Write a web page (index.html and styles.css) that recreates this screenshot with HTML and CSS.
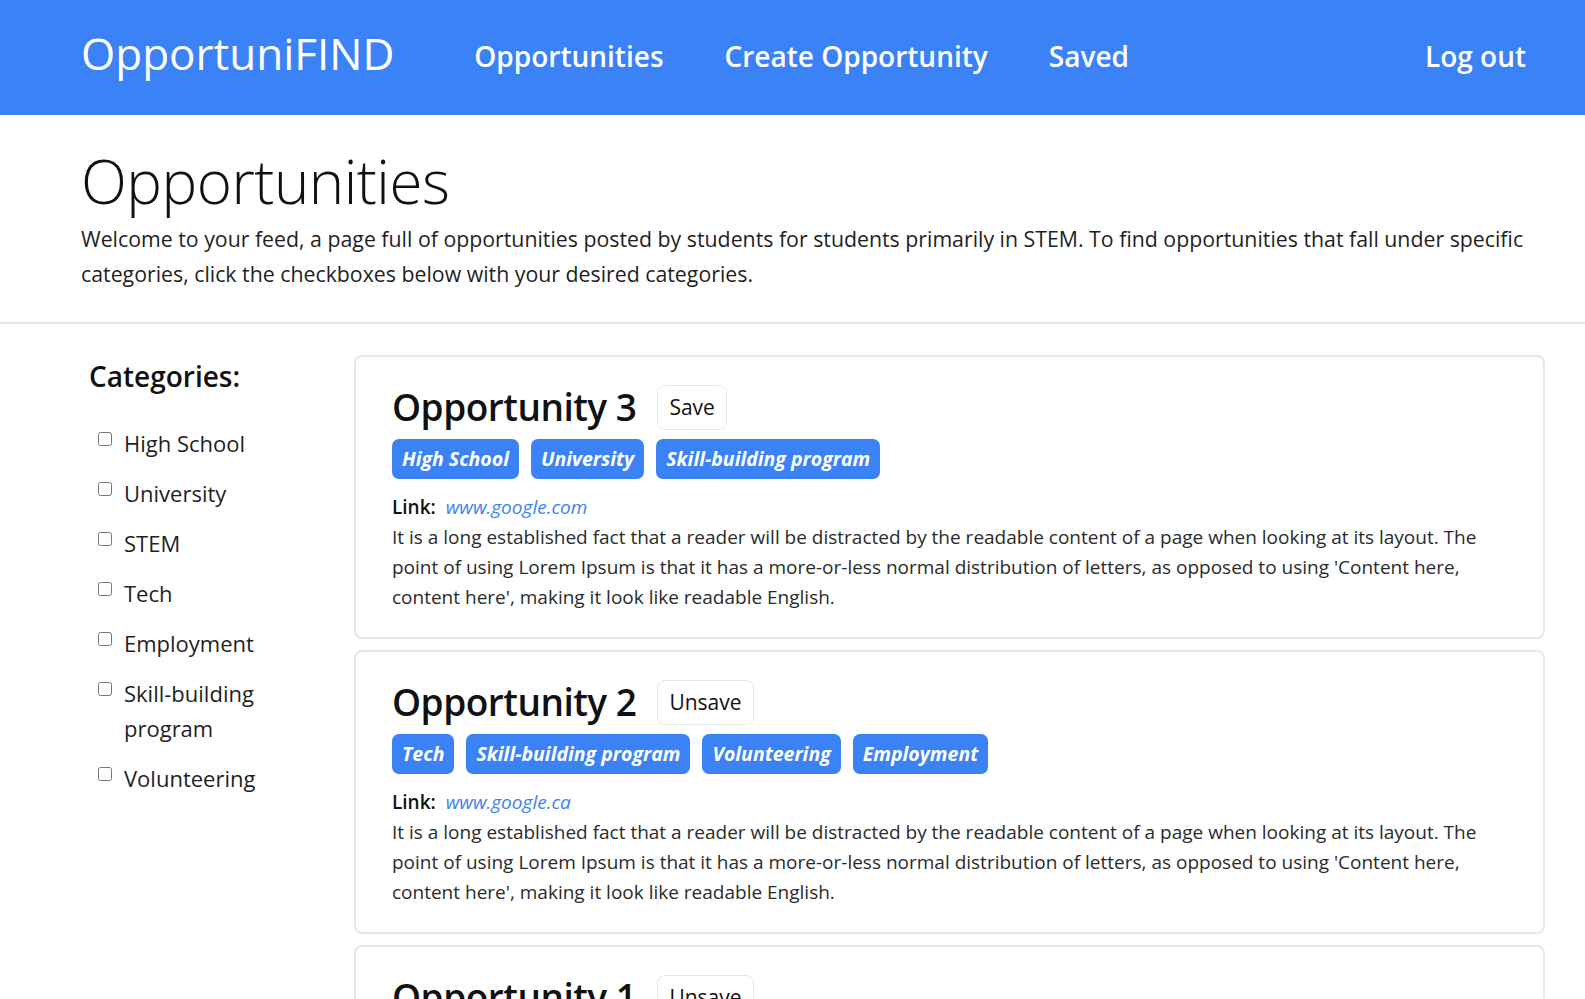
FILE: index.html
```html
<!DOCTYPE html>
<html lang="en">
<head>
<meta charset="utf-8">
<title>OpportuniFIND</title>
<link rel="stylesheet" href="styles.css">
</head>
<body>
<header class="nav">
  <a class="logo" href="#">OpportuniFIND</a>
  <nav class="nav-links">
    <a href="#">Opportunities</a>
    <a href="#">Create Opportunity</a>
    <a href="#">Saved</a>
  </nav>
  <a class="logout" href="#">Log out</a>
</header>

<section class="intro">
  <h1>Opportunities</h1>
  <p>Welcome to your feed, a page full of opportunities posted by students for students primarily in STEM. To find opportunities that fall under specific categories, click the checkboxes below with your desired categories.</p>
</section>

<main class="main">
  <aside class="sidebar">
    <h2>Categories:</h2>
    <ul class="cats">
      <li><input type="checkbox" id="c1"><label for="c1">High School</label></li>
      <li><input type="checkbox" id="c2"><label for="c2">University</label></li>
      <li><input type="checkbox" id="c3"><label for="c3">STEM</label></li>
      <li><input type="checkbox" id="c4"><label for="c4">Tech</label></li>
      <li><input type="checkbox" id="c5"><label for="c5">Employment</label></li>
      <li><input type="checkbox" id="c6"><label for="c6">Skill-building program</label></li>
      <li><input type="checkbox" id="c7"><label for="c7">Volunteering</label></li>
    </ul>
  </aside>

  <div class="feed">
    <article class="card">
      <div class="card-head">
        <h3>Opportunity 3</h3>
        <button class="save">Save</button>
      </div>
      <div class="tags">
        <span class="tag">High School</span>
        <span class="tag">University</span>
        <span class="tag">Skill-building program</span>
      </div>
      <p class="link"><strong>Link:</strong> <a href="#">www.google.com</a></p>
      <p class="desc">It is a long established fact that a reader will be distracted by the readable content of a page when looking at its layout. The point of using Lorem Ipsum is that it has a more-or-less normal distribution of letters, as opposed to using 'Content here, content here', making it look like readable English.</p>
    </article>

    <article class="card">
      <div class="card-head">
        <h3>Opportunity 2</h3>
        <button class="save">Unsave</button>
      </div>
      <div class="tags">
        <span class="tag">Tech</span>
        <span class="tag">Skill-building program</span>
        <span class="tag">Volunteering</span>
        <span class="tag">Employment</span>
      </div>
      <p class="link"><strong>Link:</strong> <a href="#">www.google.ca</a></p>
      <p class="desc">It is a long established fact that a reader will be distracted by the readable content of a page when looking at its layout. The point of using Lorem Ipsum is that it has a more-or-less normal distribution of letters, as opposed to using 'Content here, content here', making it look like readable English.</p>
    </article>

    <article class="card">
      <div class="card-head">
        <h3>Opportunity 1</h3>
        <button class="save">Unsave</button>
      </div>
      <div class="tags">
        <span class="tag">STEM</span>
        <span class="tag">University</span>
      </div>
      <p class="link"><strong>Link:</strong> <a href="#">www.google.com</a></p>
      <p class="desc">It is a long established fact that a reader will be distracted by the readable content of a page when looking at its layout. The point of using Lorem Ipsum is that it has a more-or-less normal distribution of letters, as opposed to using 'Content here, content here', making it look like readable English.</p>
    </article>
  </div>
</main>
</body>
</html>
```
FILE: styles.css
```css
* { box-sizing: border-box; }
html, body { margin: 0; padding: 0; }
body {
  font-family: "Open Sans", "Noto Sans", sans-serif;
  color: #111;
  background: #fff;
}
a { text-decoration: none; }

.nav {
  display: flex;
  align-items: center;
  height: 115px;
  padding: 0 59px 0 81px;
  background: #3b82f6;
}
.nav a { color: #fff; }
.logo {
  font-size: 44px;
  font-weight: 500;
  margin-right: 80px;
  margin-bottom: 10px;
}
.nav-links { display: flex; gap: 61px; margin-bottom: 4px; }
.nav-links a, .logout {
  font-size: 28px;
  font-weight: 600;
}
.logout { margin-left: auto; margin-bottom: 4px; }

.intro {
  padding: 30px 57px 31px 81px;
  border-bottom: 2px solid #e5e7eb;
}
.intro h1 {
  margin: 0 0 4px;
  font-size: 60px;
  font-weight: 300;
  line-height: 1.2;
  letter-spacing: -0.5px;
}
.intro p {
  margin: 0;
  font-size: 21.3px;
  line-height: 35px;
  color: #1f1f1f;
}

.main {
  display: flex;
  padding: 31px 40px 0 81px;
}
.sidebar {
  width: 273px;
  flex-shrink: 0;
  padding-left: 8px;
}
.sidebar h2 {
  margin: 0 0 30px;
  padding-top: 1px;
  font-size: 28px;
  font-weight: 600;
  line-height: 40px;
}
.cats { list-style: none; margin: 0; padding: 0 0 0 9px; }
.cats li {
  display: flex;
  align-items: flex-start;
  margin-bottom: 15px;
  width: 175px;
}
.cats input {
  width: 14px;
  height: 14px;
  margin: 6px 12px 0 0;
  flex-shrink: 0;
}
.cats label {
  font-size: 22px;
  line-height: 35px;
  color: #1f1f1f;
}

.feed {
  flex: 1;
  display: flex;
  flex-direction: column;
  gap: 11px;
}
.card {
  border: 2px solid #e5e7eb;
  border-radius: 8px;
  padding: 25px 36px 25px 36px;
}
.card-head {
  display: flex;
  align-items: center;
  gap: 21px;
}
.card-head h3 {
  margin: 0;
  font-size: 37px;
  font-weight: 600;
  line-height: 50px;
  letter-spacing: -0.5px;
}
.save {
  font-family: inherit;
  font-size: 21px;
  color: #111;
  background: #fff;
  border: 1px solid #e5e7eb;
  border-radius: 8px;
  padding: 6px 11px;
  line-height: 31px;
}
.tags {
  display: flex;
  gap: 12px;
  margin-top: 7px;
}
.tag {
  background: #3b82f6;
  color: #fff;
  font-weight: 700;
  font-style: italic;
  font-size: 19.5px;
  line-height: 40px;
  padding: 0 10px;
  border-radius: 7px;
}
.link {
  margin: 13px 0 0;
  font-size: 19px;
  line-height: 30px;
}
.link strong { font-weight: 600; margin-right: 5px; }
.link a { color: #3b82f6; font-style: italic; }
.desc {
  margin: 0;
  font-size: 19px;
  line-height: 30px;
  color: #2b2b2b;
}
```
